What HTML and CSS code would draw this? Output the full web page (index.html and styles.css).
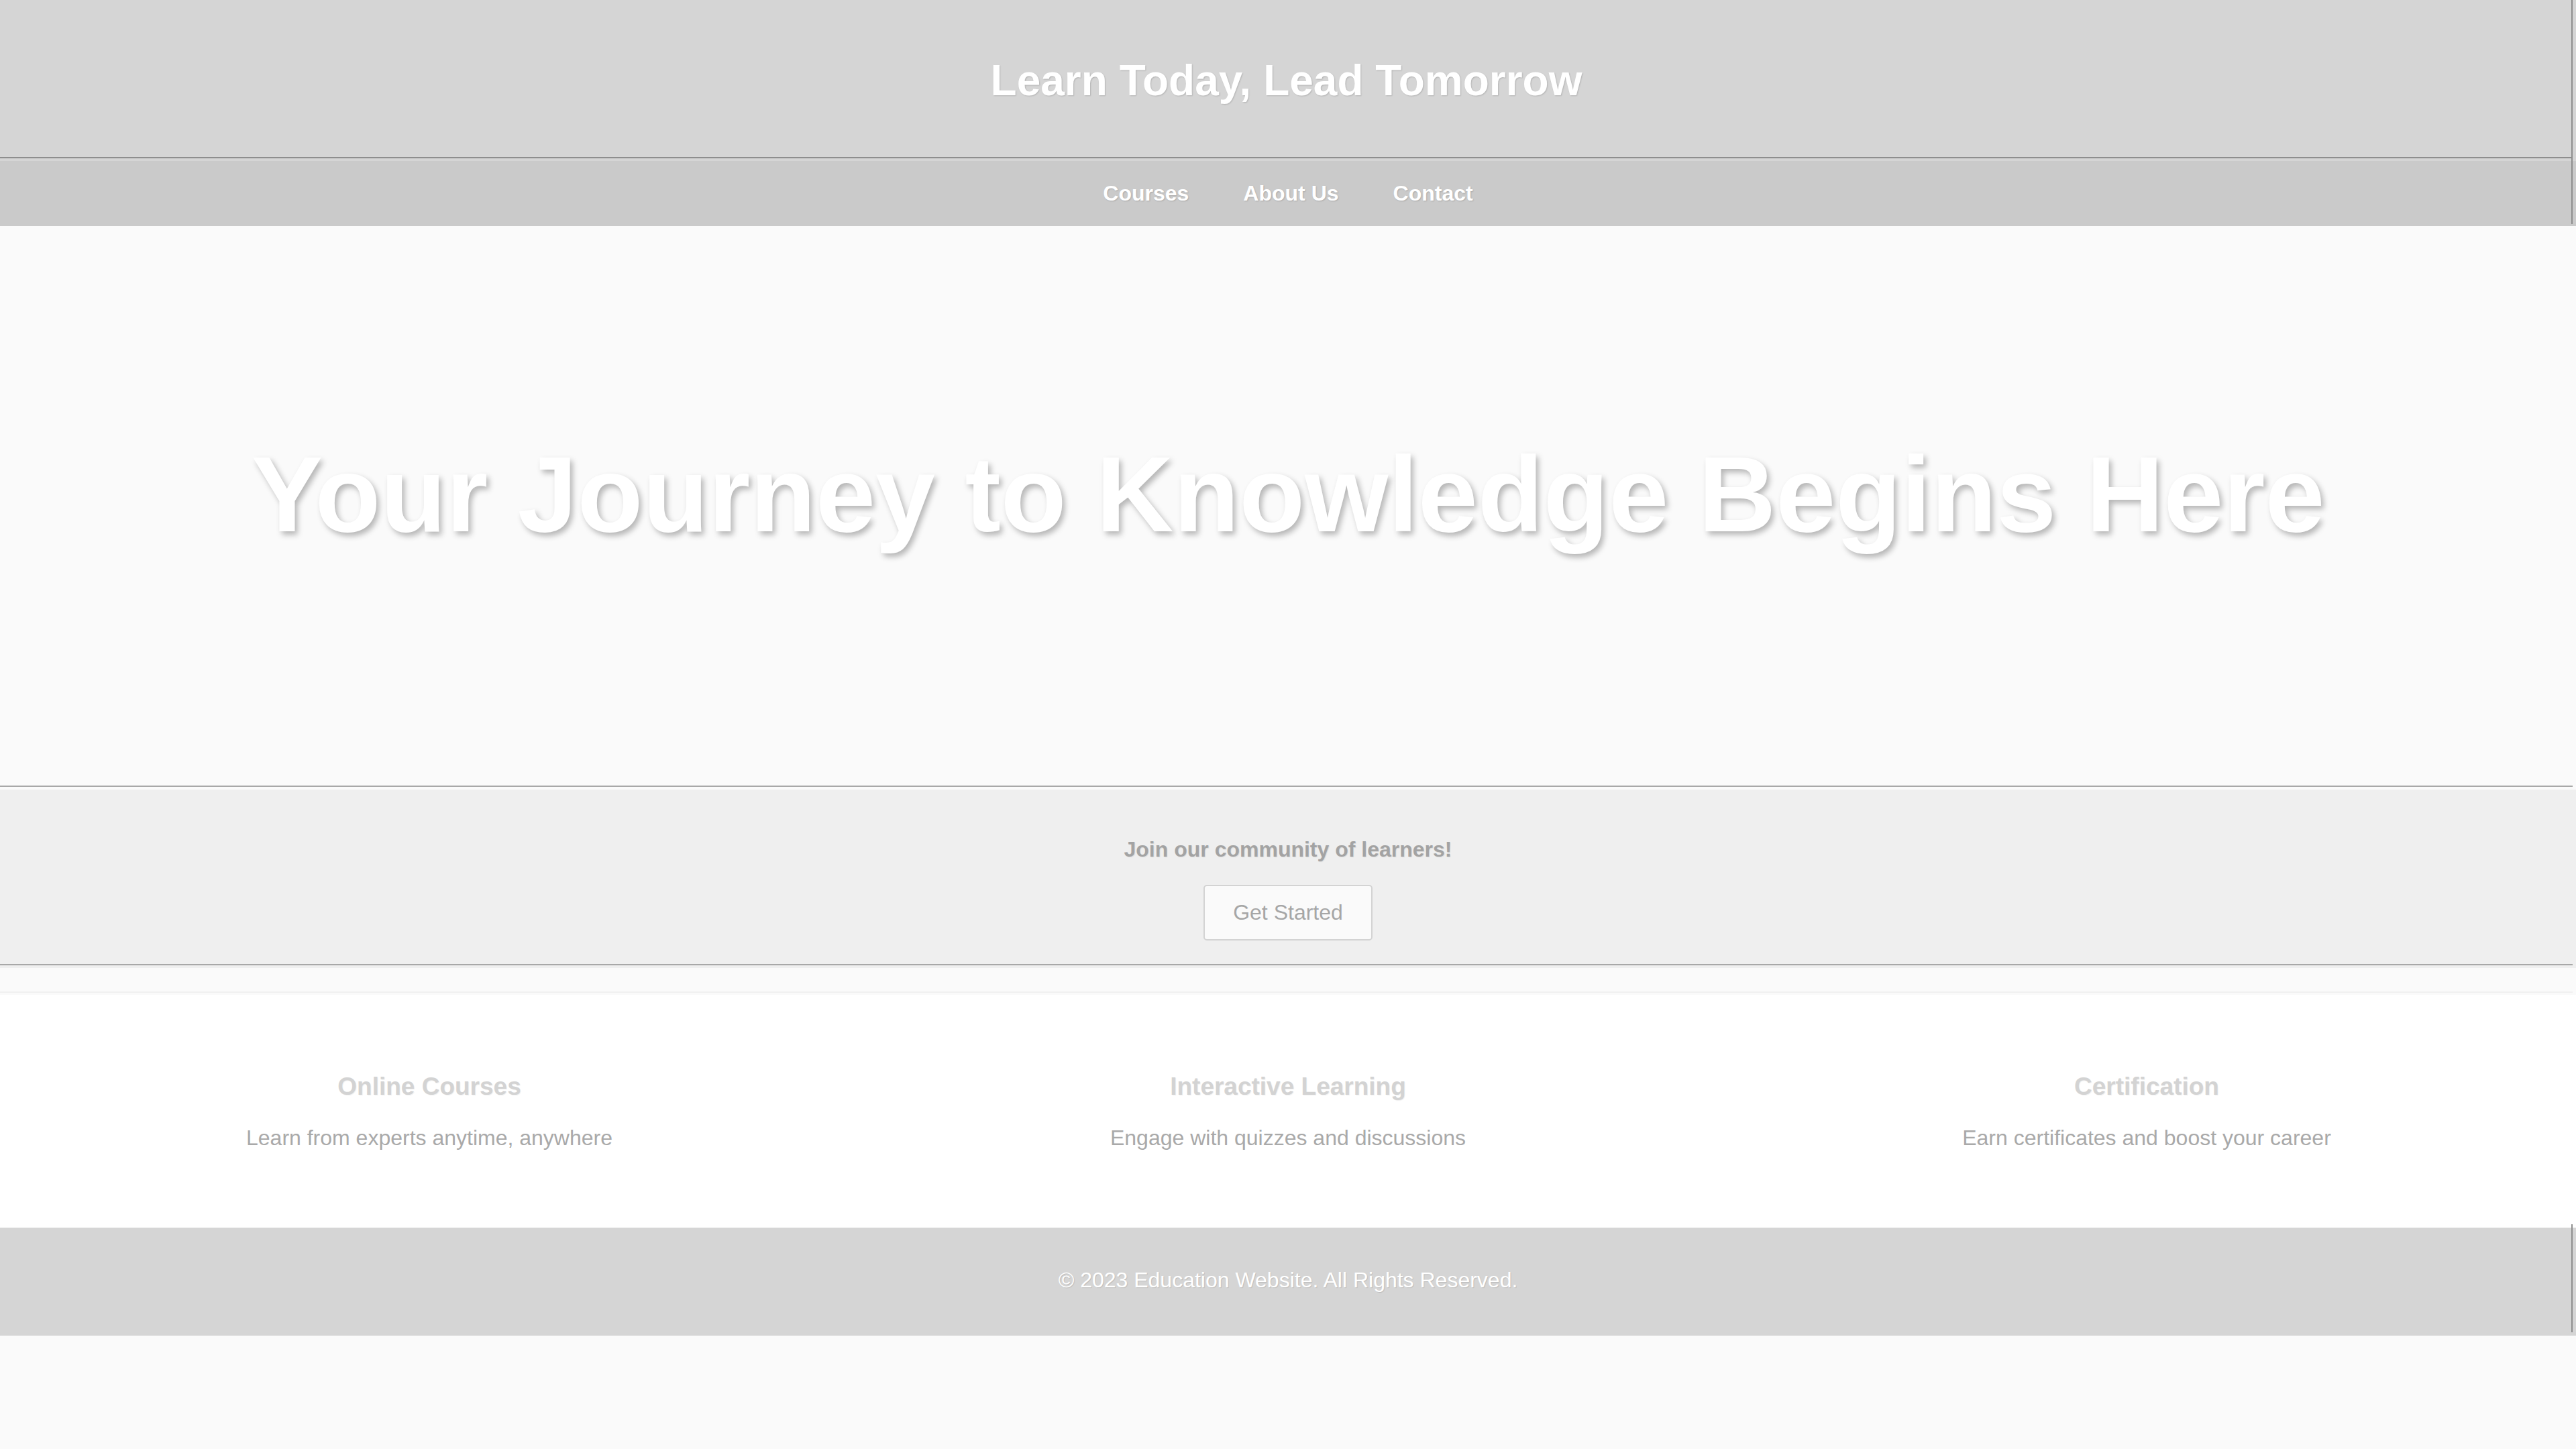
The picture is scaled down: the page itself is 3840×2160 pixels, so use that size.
FILE: index.html
```html
<!DOCTYPE html>
<html lang="en">
<head>
<meta charset="utf-8">
<title>Education Website</title>
<link rel="stylesheet" href="styles.css">
</head>
<body>
<div class="top">
  <header class="header">
    <div class="brand">
      <h1 class="brand-title">Learn Today, Lead Tomorrow</h1>
    </div>
  </header>
  <nav class="nav">
    <a class="nav-link" href="#">Courses</a>
    <a class="nav-link" href="#">About Us</a>
    <a class="nav-link" href="#">Contact</a>
  </nav>
</div>
<section class="hero">
  <h2 class="hero-title">Your Journey to Knowledge Begins Here</h2>
</section>
<section class="cta">
  <p class="cta-text">Join our community of learners!</p>
  <button class="cta-button">Get Started</button>
</section>
<section class="features">
  <div class="feature">
    <h3 class="feature-title">Online Courses</h3>
    <p class="feature-text">Learn from experts anytime, anywhere</p>
  </div>
  <div class="feature">
    <h3 class="feature-title">Interactive Learning</h3>
    <p class="feature-text">Engage with quizzes and discussions</p>
  </div>
  <div class="feature">
    <h3 class="feature-title">Certification</h3>
    <p class="feature-text">Earn certificates and boost your career</p>
  </div>
</section>
<footer class="footer">
  <p class="footer-text">© 2023 Education Website. All Rights Reserved.</p>
</footer>
</body>
</html>
```
FILE: styles.css
```css
html, body {
  margin: 0;
  padding: 0;
}
body {
  background: #fafafa;
  font-family: "Liberation Sans", Arial, sans-serif;
}
.top {
  position: relative;
}
.top::after {
  content: "";
  position: absolute;
  top: 0;
  right: 5px;
  width: 2px;
  height: 334px;
  background: #8e8e8e;
}
.header {
  background: #d5d5d5;
  padding-bottom: 4px;
}
.brand {
  height: 236px;
  box-sizing: border-box;
  margin-right: 5px;
  border-bottom: 2px solid #8e8e8e;
  display: flex;
  align-items: center;
  justify-content: center;
  padding-top: 6px;
}
.brand-title {
  margin: 0;
  font-size: 64px;
  line-height: 73px;
  font-weight: 700;
  color: #ffffff;
  text-shadow: 1px 1px 2px rgba(0, 0, 0, 0.16);
}
.nav {
  background: #cacaca;
  height: 97px;
  display: flex;
  align-items: center;
  justify-content: center;
  gap: 81px;
}
.nav-link {
  font-size: 32px;
  line-height: 37px;
  font-weight: 700;
  color: #ffffff;
  text-decoration: none;
  text-shadow: 1px 1px 2px rgba(0, 0, 0, 0.16);
}
.hero {
  background: #fafafa;
  padding: 308px 0 348px;
  text-align: center;
}
.hero-title {
  margin: 0;
  font-size: 160px;
  line-height: 184px;
  font-weight: 700;
  color: #ffffff;
  text-shadow: 4px 5px 8px rgba(0, 0, 0, 0.28);
}
.cta {
  position: relative;
  background: #efefef;
  padding: 35px 0 41px;
  display: flex;
  flex-direction: column;
  align-items: center;
}
.cta::before,
.cta::after {
  content: "";
  position: absolute;
  left: 0;
  right: 5px;
  height: 2px;
  background: #a8a8a8;
}
.cta::before {
  top: -6px;
}
.cta::after {
  bottom: 4px;
}
.cta-text {
  margin: 36px 0 34px;
  font-size: 32px;
  line-height: 37px;
  font-weight: 700;
  color: #a3a3a3;
  text-shadow: 1px 1px 1px rgba(0, 0, 0, 0.08);
}
.cta-button {
  font-family: "Liberation Sans", Arial, sans-serif;
  font-size: 32px;
  line-height: 37px;
  color: #a6a6a6;
  background: #fafafa;
  border: 2px solid #d3d3d3;
  border-radius: 5px;
  padding: 21px 42px;
  cursor: pointer;
}
.features {
  position: relative;
  margin-top: 40px;
  background: #ffffff;
  padding: 79px 0 78px;
  display: flex;
}
.features::before {
  content: "";
  position: absolute;
  left: 0;
  right: 5px;
  top: -5px;
  height: 2px;
  background: #f1f1f1;
}
.feature {
  flex: 1;
  text-align: center;
}
.feature-title {
  margin: 37px 0;
  font-size: 37px;
  line-height: 42px;
  font-weight: 700;
  color: #d3d3d3;
  text-shadow: 1px 1px 1px rgba(0, 0, 0, 0.06);
}
.feature-text {
  margin: 37px 0;
  font-size: 32px;
  line-height: 37px;
  color: #a9a9a9;
}
.footer {
  position: relative;
  background: #d5d5d5;
  padding: 60px 0 64px;
  text-align: center;
}
.footer::after {
  content: "";
  position: absolute;
  right: 5px;
  top: -5px;
  bottom: 5px;
  width: 2px;
  background: #8e8e8e;
}
.footer-text {
  margin: 0;
  font-size: 32px;
  line-height: 37px;
  color: #ffffff;
  text-shadow: 1px 1px 1px rgba(0, 0, 0, 0.12);
}
```
